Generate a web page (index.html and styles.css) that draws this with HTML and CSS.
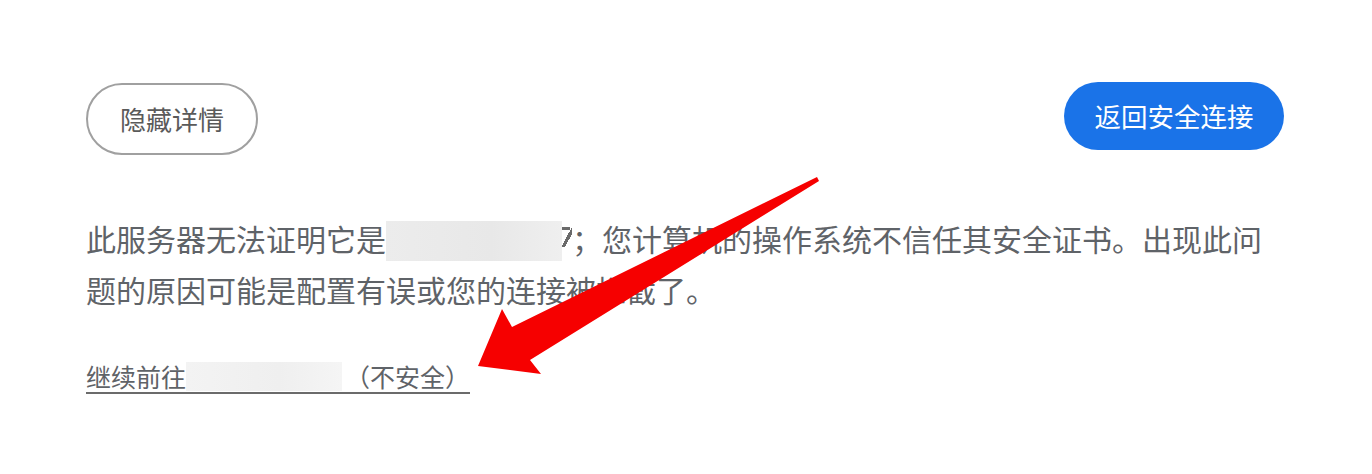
FILE: index.html
```html
<!DOCTYPE html>
<html lang="zh-CN">
<head>
<meta charset="utf-8">
<link rel="stylesheet" href="styles.css">
</head>
<body>
<div class="page">
  <div class="actions">
    <button class="btn btn-ghost">隐藏详情</button>
    <button class="btn btn-primary">返回安全连接</button>
  </div>
  <p class="details">此服务器无法证明它是<span class="mask mask-host"></span><span class="cut"></span>；您计算机的操作系统不信任其安全证书。出现此问题的原因可能是配置有误或您的连接被拦截了。</p>
  <a class="proceed" href="#">继续前往<span class="mask mask-link"></span>（不安全）</a>
</div>
<svg class="arrow" width="1372" height="474" viewBox="0 0 1372 474">
  <polygon points="817,177 512,327 502,309 478,366 541,374 530,360 819,181" fill="#f60000"/>
</svg>
</body>
</html>
```
FILE: styles.css
```css
html, body {
  margin: 0;
  padding: 0;
  background: #ffffff;
}
body {
  width: 1372px;
  height: 474px;
  overflow: hidden;
  position: relative;
  font-family: "Noto Sans CJK SC", "Noto Sans", sans-serif;
  color: #5f6368;
}
.page {
  padding: 82px 88px 0 86px;
  width: 1198px;
}
.actions {
  display: flex;
  justify-content: space-between;
  align-items: flex-start;
}
.btn {
  font-family: "Noto Sans CJK SC", "Noto Sans", sans-serif;
  font-size: 26px;
  line-height: 1;
  border-radius: 36px;
  cursor: pointer;
  padding: 0;
}
.btn-ghost {
  margin-top: 1px;
  width: 172px;
  height: 72px;
  background: #fff;
  color: #5a5a5a;
  border: 2px solid #a0a0a0;
}
.btn-primary {
  width: 220px;
  height: 68px;
  background: #1a73e8;
  color: #fff;
  border: none;
  font-size: 26.5px;
}
.details {
  margin: 58px 0 0 0;
  font-size: 30px;
  line-height: 51px;
  color: #5f6368;
}
.mask {
  display: inline-block;
}
.mask-host {
  width: 176px;
  height: 40px;
  vertical-align: -10px;
  background: linear-gradient(90deg, #ececec, #e8e8e8 60%, #efefef);
}
.cut {
  display: inline-block;
  width: 10px;
  height: 20px;
  vertical-align: 4px;
  background:
    linear-gradient(#6a6a6a, #6a6a6a) 0 0 / 8px 3px no-repeat,
    linear-gradient(118deg, transparent 48%, #6a6a6a 48%, #6a6a6a 66%, transparent 66%);
}
.proceed {
  display: flex;
  width: fit-content;
  align-items: center;
  margin-top: 45px;
  font-size: 25px;
  line-height: 32px;
  color: #5f6368;
  text-decoration: none;
  border-bottom: 2px solid #6b6b6b;
}
.mask-link {
  width: 156px;
  height: 29px;
  margin: 0 3px 0 0;
  background: linear-gradient(90deg, #f3f3f3, #efefef 60%, #f5f5f5);
}
.arrow {
  position: absolute;
  left: 0;
  top: 0;
  pointer-events: none;
}
```
